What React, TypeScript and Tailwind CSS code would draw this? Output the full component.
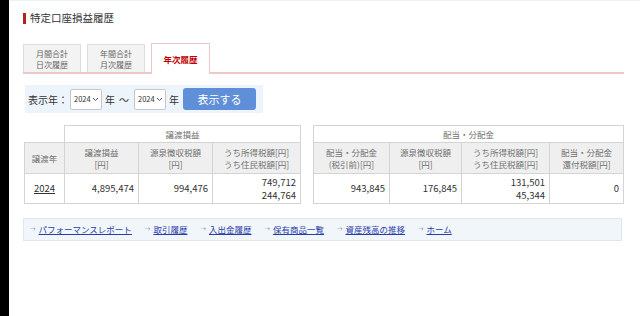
import React from "react";

const F = { fontFamily: '"Noto Sans CJK JP", "Noto Sans", sans-serif' };

function Select() {
  return (
    <div className="flex items-center h-[21px] w-[32px] bg-white border border-[#c8c8c8] rounded-[2px] pl-[3px] pr-[2px] justify-between">
      <span className="text-[7.5px] text-[#333] leading-none">2024</span>
      <svg width="7" height="5" viewBox="0 0 7 5"><path d="M1 1 L3.5 3.5 L6 1" stroke="#555" strokeWidth="1" fill="none" /></svg>
    </div>
  );
}

const links = ["パフォーマンスレポート", "取引履歴", "入出金履歴", "保有商品一覧", "資産残高の推移", "ホーム"];

export default function App() {
  const th = "border border-[#d4d4d4] font-normal text-[#707070] text-[8.5px] leading-[12px]";
  const td = "border border-[#d4d4d4] text-[#333] text-[9.5px] leading-[13px] text-right px-[4px]";
  return (
    <div className="flex w-[640px] h-[316px] bg-white overflow-hidden" style={F}>
      <div className="w-[9px] bg-black shrink-0" />
      <div className="flex-1 border-t border-[#eef1f6] pl-[14px] pr-[18px]">
        <div className="flex items-center h-[11px] mt-[12px]">
          <div className="w-[3px] h-[11px] bg-[#b22222]" />
          <span className="ml-[4px] text-[10.5px] text-[#333] leading-none">特定口座損益履歴</span>
        </div>
        <div className="flex items-end mt-[20px] border-b-2 border-[#ecc8c8] h-[30px]">
          <div className="flex flex-col items-center justify-center w-[58px] h-[28px] bg-[#f3f3f3] border border-[#dddddd] border-b-0 text-[8px] text-[#666] leading-[11px]">
            <span>月間合計</span><span>日次履歴</span>
          </div>
          <div className="flex flex-col items-center justify-center w-[58px] h-[28px] ml-[6px] bg-[#f3f3f3] border border-[#dddddd] border-b-0 text-[8px] text-[#666] leading-[11px]">
            <span>年間合計</span><span>月次履歴</span>
          </div>
          <div className="flex items-center justify-center w-[59px] h-[31px] ml-[6px] -mb-[2px] bg-white border border-[#ecc8c8] border-b-0 text-[8.5px] text-[#c00000] font-bold">
            年次履歴
          </div>
        </div>
        <div className="flex items-center mt-[11px] ml-[2px] w-[238px] h-[28px] bg-[#eef4fb] pl-[3px]">
          <span className="text-[10px] text-[#333] mr-[2px]">表示年：</span>
          <Select />
          <span className="text-[10px] text-[#333] ml-[3px]">年</span>
          <span className="text-[10px] text-[#333] ml-[4px] mr-[5px]">～</span>
          <Select />
          <span className="text-[10px] text-[#333] ml-[3px]">年</span>
          <div className="ml-[4px] w-[73px] h-[22px] bg-[#5f8fd8] rounded-[3px] flex items-center justify-center text-white text-[11px]">表示する</div>
        </div>
        <div className="flex mt-[12px] ml-[1px] gap-[12px]">
          <table className="border-collapse w-[276px] table-fixed">
            <colgroup>
              <col className="w-[40px]" /><col className="w-[74px]" /><col className="w-[74px]" /><col className="w-[88px]" />
            </colgroup>
            <tbody>
              <tr className="h-[17px]">
                <td />
                <th colSpan={3} className={th + " bg-white"}>譲渡損益</th>
              </tr>
              <tr className="h-[31px] bg-[#efefef]">
                <th className={th}>譲渡年</th>
                <th className={th}>譲渡損益<br />[円]</th>
                <th className={th}>源泉徴収税額<br />[円]</th>
                <th className={th}>うち所得税額[円]<br />うち住民税額[円]</th>
              </tr>
              <tr className="h-[30px]">
                <td className={td + " text-center!"}><span className="underline">2024</span></td>
                <td className={td}>4,895,474</td>
                <td className={td}>994,476</td>
                <td className={td}>749,712<br />244,764</td>
              </tr>
            </tbody>
          </table>
          <table className="border-collapse w-[310px] table-fixed">
            <colgroup>
              <col className="w-[76px]" /><col className="w-[72px]" /><col className="w-[88px]" /><col className="w-[74px]" />
            </colgroup>
            <tbody>
              <tr className="h-[17px]">
                <th colSpan={4} className={th + " bg-white"}>配当・分配金</th>
              </tr>
              <tr className="h-[31px] bg-[#efefef]">
                <th className={th}>配当・分配金<br />(税引前)[円]</th>
                <th className={th}>源泉徴収税額<br />[円]</th>
                <th className={th}>うち所得税額[円]<br />うち住民税額[円]</th>
                <th className={th}>配当・分配金<br />還付税額[円]</th>
              </tr>
              <tr className="h-[30px]">
                <td className={td}>943,845</td>
                <td className={td}>176,845</td>
                <td className={td}>131,501<br />45,344</td>
                <td className={td}>0</td>
              </tr>
            </tbody>
          </table>
        </div>
        <div className="flex items-center mt-[14px] h-[23px] w-[599px] bg-[#f1f6fb] border border-[#dfe6ee] pl-[6px] gap-[13px]">
          {links.map((l) => (
            <span key={l} className="flex items-center text-[8.5px] text-[#2a3ca8]">
              <span className="text-[5.5px] text-[#7080c0] mr-[3px]">→</span>
              <span className="underline">{l}</span>
            </span>
          ))}
        </div>
      </div>
    </div>
  );
}
